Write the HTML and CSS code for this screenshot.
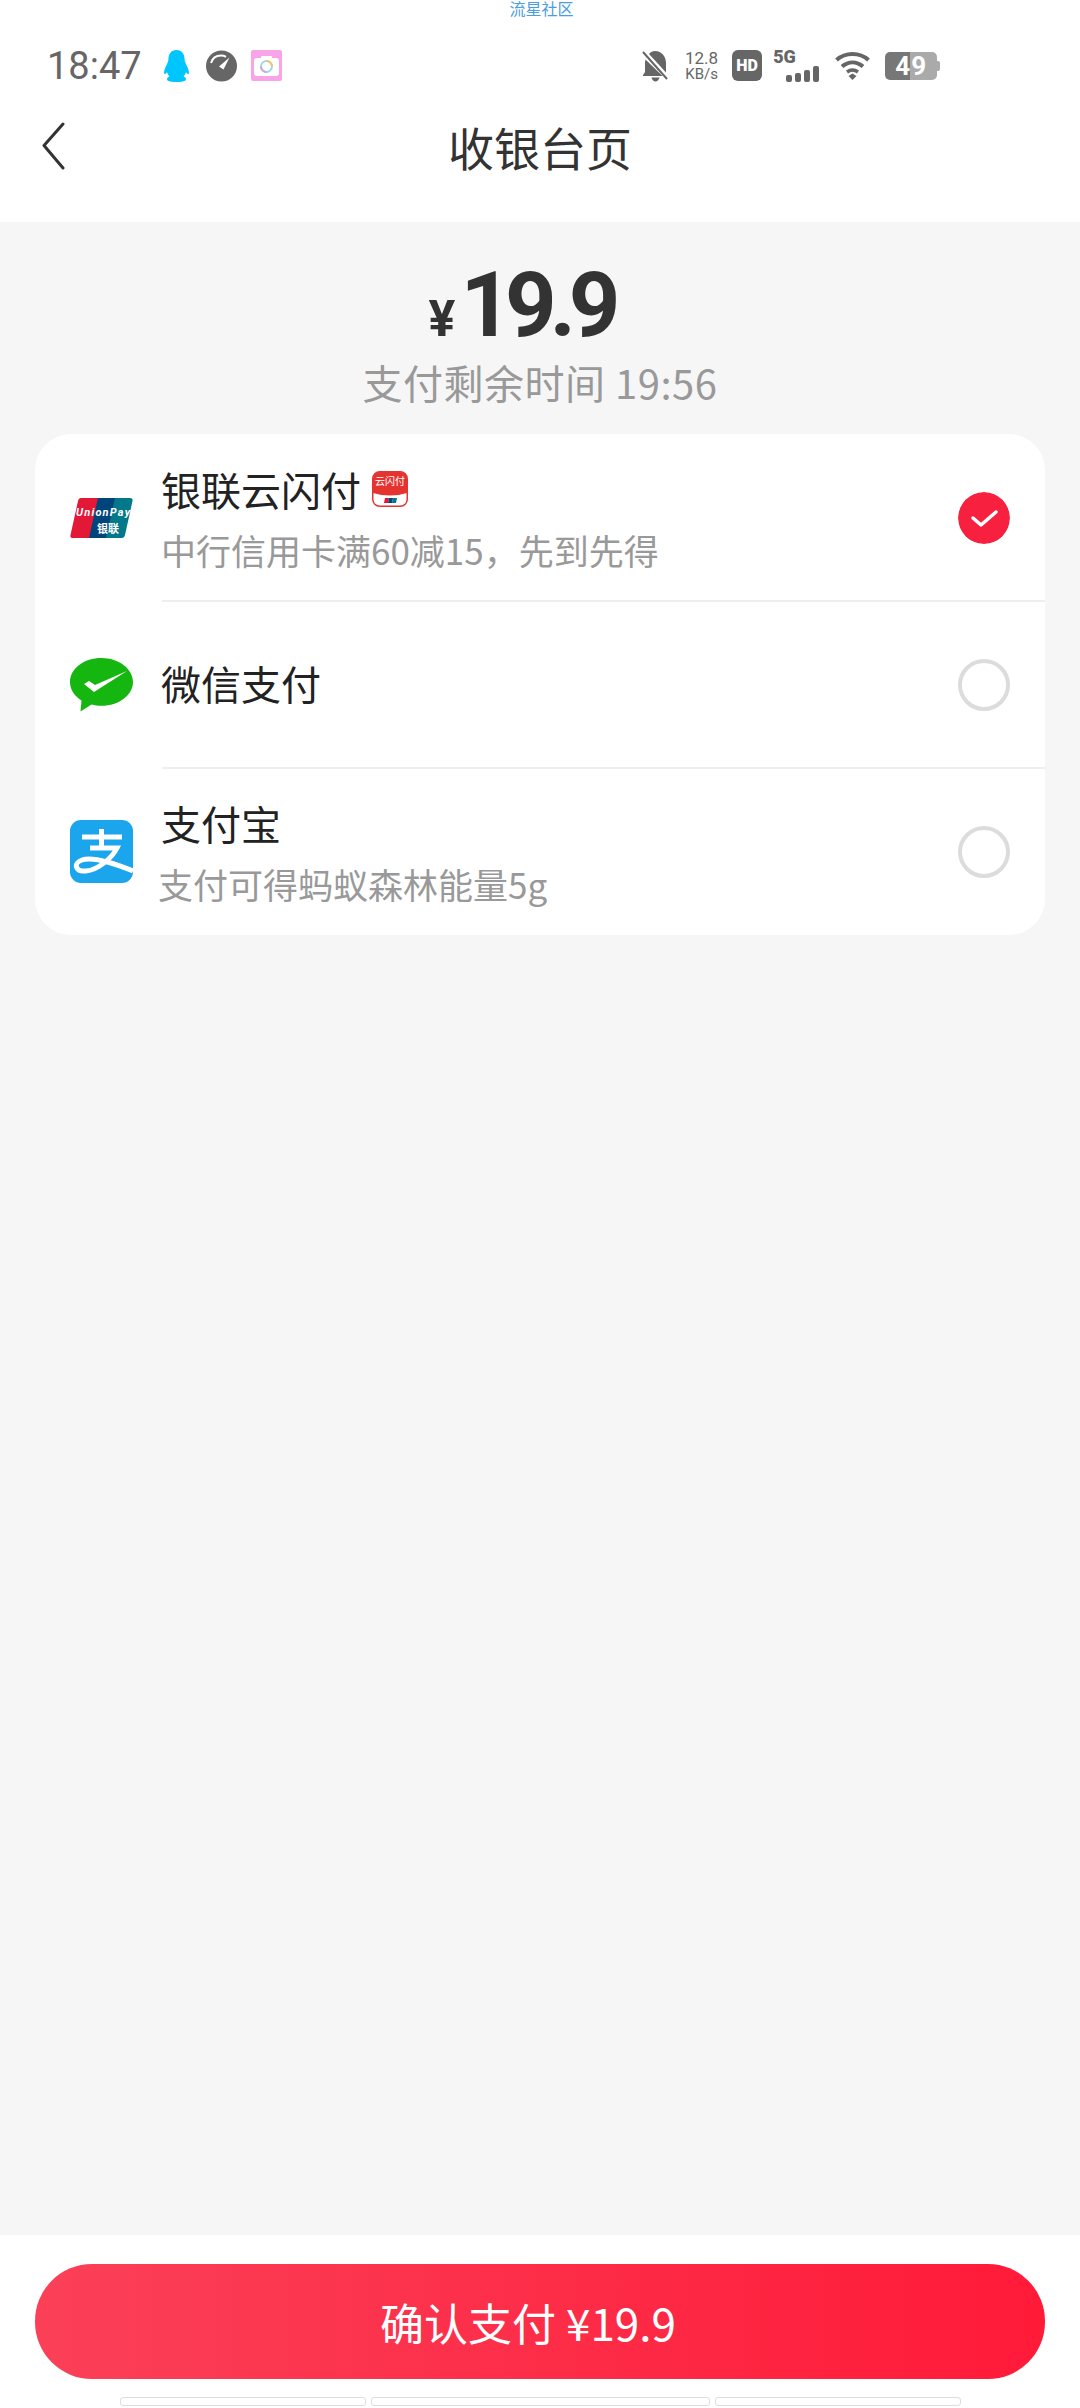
FILE: index.html
```html
<!DOCTYPE html>
<html lang="zh-CN">
<head>
    <meta charset="UTF-8">
    <meta name="viewport" content="width=device-width, initial-scale=1.0">
    <title>收银台页</title>
    <link rel="stylesheet" href="styles.css">
</head>
<body>

<header class="top">
    <div class="watermark">流星社区</div>

    <div class="status-bar">
        <span class="clock">18:47</span>
        <svg class="st-qq" width="25" height="32" viewBox="0 0 25 32">
            <path fill="#00c6ff" d="M12.500 0C7 0 4.600 4 4.400 9c0 2-.4 3-1.600 5.400C1.200 17.500 0 20.500 0 23c0 1 .6 1.300 1.200 1 .7-.3 1.300-1 1.800-1.800.5 1.600 1.300 3 2.400 4.200-1.400.6-2.400 1.500-2.400 2.600 0 1.600 1.800 3 9.500 3s9.500-1.400 9.500-3c0-1.100-1-2-2.400-2.600 1.100-1.200 1.900-2.600 2.400-4.200.5.800 1.100 1.500 1.800 1.800.6.3 1.200 0 1.200-1 0-2.500-1.200-5.500-2.800-8.600C21 12 20.600 11 20.600 9 20.400 4 18 0 12.500 0z"/>
        </svg>
        <svg class="st-gauge" width="31" height="32" viewBox="0 0 31 32">
            <circle cx="15.500" cy="16" r="15.500" fill="#666"/>
            <path d="M5 13C6.500 8 10.500 5.500 15 5.500c2 0 3.500.4 5 1.300" fill="none" stroke="#fff" stroke-width="2"/>
            <path d="M23.500 7.500L17.500 19.500 13 16.500z" fill="#fff"/>
        </svg>
        <svg class="st-cam" width="31" height="31" viewBox="0 0 31 31">
            <rect width="31" height="31" rx="2" fill="#f9a4e8"/>
            <rect x="3" y="8" width="25" height="18" rx="3" fill="#fff"/>
            <rect x="10" y="6" width="11" height="4" rx="1" fill="#fff"/>
            <circle cx="15.500" cy="16.500" r="5.500" fill="none" stroke="#9fd8e8" stroke-width="2"/>
            <path d="M15.500 11a5.500 5.500 0 0 1 5.500 5.500" fill="none" stroke="#f5c36b" stroke-width="2"/>
            <path d="M10 16.500a5.500 5.500 0 0 0 5.500 5.500" fill="none" stroke="#c9a6ea" stroke-width="2"/>
        </svg>

        <div class="status-right">
            <svg class="st-bell" width="27" height="32" viewBox="0 0 27 32">
                <path fill="#666" d="M13 1c-2.500 0-4.500 1-6 3l17 18.500V13c0-6-4-12-11-12zM3.500 9.500C3.200 10.500 3 11.800 3 13v9l-2 3v1h19.500zM9.500 27.500c.5 2.300 2 4 4 4s3.500-1.700 4-4z"/>
                <path d="M1 2l24 27" stroke="#666" stroke-width="2"/>
            </svg>
            <div class="speed"><span>12.8</span><span class="speed-unit">KB/s</span></div>
            <span class="hd">HD</span>
            <div class="signal">
                <span class="five-g">5G</span>
                <div class="signal-bars">
                    <i class="bar-1"></i><i class="bar-2"></i><i class="bar-3"></i><i class="bar-4"></i>
                </div>
            </div>
            <svg class="st-wifi" width="35" height="29" viewBox="0 0 35 29">
                <path d="M1.500 9C10.500 1 24.500 1 33.500 9" fill="none" stroke="#666" stroke-width="4"/>
                <path d="M7 15.500c6.500-5.500 14.500-5.500 21 0" fill="none" stroke="#666" stroke-width="4"/>
                <path d="M12 21c3.500-2.500 7.500-2.500 11 0" fill="none" stroke="#666" stroke-width="3.500"/>
                <path d="M13.500 25l4-2.500 4 2.500-4 4z" fill="#666"/>
            </svg>
            <div class="battery">
                <div class="battery-body"><span>49</span></div>
                <i class="battery-cap"></i>
            </div>
        </div>
    </div>

    <nav class="nav">
        <svg class="back" width="24" height="48" viewBox="0 0 24 48">
            <path d="M22 2L3 23.500 22 46" fill="none" stroke="#333" stroke-width="3" stroke-linecap="round" stroke-linejoin="round"/>
        </svg>
        <h1 class="nav-title">收银台页</h1>
    </nav>
</header>

<main class="content">
    <div class="price"><span class="price-sign">¥</span><span class="price-num">19.9</span></div>
    <div class="countdown">支付剩余时间 19:56</div>

    <section class="pay-card">
        <div class="pay-row">
            <svg class="pay-icon" width="63" height="40" viewBox="0 0 63 40">
                <path d="M11 0h19l-9 40H3c-2 0-3-1-2.500-3L8 3c.4-2 1.500-3 3-3z" fill="#e21836"/>
                <path d="M28 0h19l-9 40H19z" fill="#00447c"/>
                <path d="M45 0h15c2 0 3 1 2.500 3L55 37c-.4 2-1.500 3-3.500 3H36z" fill="#01798a"/>
                <text class="up-latin" x="6" y="18" textLength="54">UnionPay</text>
                <text class="up-cjk" x="27" y="35">银联</text>
            </svg>
            <div class="pay-text">
                <div class="pay-name">银联云闪付
                    <svg class="qp-badge" width="36" height="36" viewBox="0 0 36 36">
                        <rect x=".75" y=".75" width="34.500" height="34.500" rx="7" fill="#fff" stroke="#e5332f" stroke-width="1.500"/>
                        <path d="M1 8a7 7 0 0 1 7-7h20a7 7 0 0 1 7 7v14Q18 27 1 22z" fill="#e5332f"/>
                        <text class="qp-text" x="18" y="14" text-anchor="middle">云闪付</text>
                        <path d="M13 27h4l-1 5h-4z" fill="#e21836"/>
                        <path d="M17 27h4l-1 5h-4z" fill="#00447c"/>
                        <path d="M21 27h4l-1 5h-4z" fill="#01798a"/>
                    </svg>
                </div>
                <div class="pay-sub">中行信用卡满60减15，先到先得</div>
            </div>
            <svg class="radio" width="52" height="52" viewBox="0 0 52 52">
                <circle cx="26" cy="26" r="26" fill="#f7203f"/>
                <path d="M15 26l8 7 15-13" fill="none" stroke="#fff" stroke-width="3.500" stroke-linecap="round" stroke-linejoin="round"/>
            </svg>
        </div>

        <div class="pay-row">
            <svg class="pay-icon" width="63" height="54" viewBox="0 0 63 54">
                <path d="M31.500 0C14 0 0 10.500 0 24c0 7.500 4.500 14.200 11.500 18.500L10.500 53.500 21.500 46.500c3.200.8 6.500 1.300 10 1.300C49 47.800 63 37 63 24S49 0 31.500 0z" fill="#15b60f"/>
                <path d="M14 26l5-3 6 4 32-14-33 21z" fill="#fff"/>
            </svg>
            <div class="pay-text">
                <div class="pay-name">微信支付</div>
            </div>
            <span class="radio radio-off"></span>
        </div>

        <div class="pay-row">
            <svg class="pay-icon" width="63" height="63" viewBox="0 0 63 63">
                <rect width="63" height="63" rx="11" fill="#1aa5ec"/>
                <path d="M12 17H52M31.500 9V28M20 28H47C42 38 28 50 16 51 5 52 3 43 12 40 24 36 46 44 63 51" fill="none" stroke="#fff" stroke-width="5"/>
            </svg>
            <div class="pay-text">
                <div class="pay-name">支付宝</div>
                <div class="pay-sub pay-sub-alipay">支付可得蚂蚁森林能量5g</div>
            </div>
            <span class="radio radio-off"></span>
        </div>
    </section>
</main>

<footer class="bottom">
    <button class="confirm-btn">确认支付 ¥19.9</button>
    <div class="home-bars">
        <i class="home-bar side"></i><i class="home-bar mid"></i><i class="home-bar side"></i>
    </div>
</footer>

</body>
</html>
```

FILE: styles.css
```css
* {
    box-sizing: border-box;
}

body {
    font-family: 'Noto Sans CJK SC', 'Roboto', sans-serif;
    background-color: #f6f6f6;
    margin: 0;
    padding: 0;
    height: 2408px;
    display: flex;
    flex-direction: column;
    overflow: hidden;
}

/* Top area: status bar and title */
.top {
    background-color: #fff;
    height: 222px;
}

.watermark {
    height: 16px;
    line-height: 16px;
    font-size: 16px;
    text-align: center;
    color: #4a9de0;
    padding-left: 3px;
}

.status-bar {
    display: flex;
    align-items: center;
    height: 33px;
    margin-top: 33px;
    padding-left: 47px;
}

.clock {
    font-family: 'Roboto', sans-serif;
    font-size: 38px;
    color: #666;
    width: 117px;
}

.st-gauge {
    margin-left: 17px;
}

.st-cam {
    margin-left: 14px;
}

.status-right {
    display: flex;
    align-items: center;
    margin-left: 360px;
}

.speed {
    display: flex;
    flex-direction: column;
    align-items: center;
    margin-left: 16px;
    font-family: 'Roboto', sans-serif;
    font-size: 17px;
    line-height: 16px;
    color: #666;
}

.speed-unit {
    font-size: 15px;
}

.hd {
    margin-left: 14px;
    width: 30px;
    height: 31px;
    border-radius: 6px;
    background-color: #666;
    color: #fff;
    font-family: 'Roboto', sans-serif;
    font-weight: 900;
    font-size: 16px;
    line-height: 31px;
    text-align: center;
}

.signal {
    margin-left: 11px;
    width: 48px;
    height: 32px;
    display: flex;
    flex-direction: column;
}

.five-g {
    font-family: 'Roboto', sans-serif;
    font-weight: 900;
    font-size: 18px;
    line-height: 14px;
    color: #666;
}

.signal-bars {
    display: flex;
    align-items: flex-end;
    gap: 3px;
    height: 18px;
    margin-left: 13px;
}

.signal-bars i {
    display: block;
    width: 6px;
    background-color: #666;
    border-radius: 2px;
}

.bar-1 {
    height: 7px;
}

.bar-2 {
    height: 9px;
}

.bar-3 {
    height: 12px;
}

.bar-4 {
    height: 16px;
}

.st-wifi {
    margin-left: 14px;
}

.battery {
    display: flex;
    align-items: center;
    margin-left: 15px;
}

.battery-body {
    width: 52px;
    height: 28px;
    border-radius: 5px;
    background: linear-gradient(to right, #777 48%, #aaa 48%);
    color: #fff;
    font-family: 'Roboto', sans-serif;
    font-weight: 700;
    font-size: 26px;
    line-height: 28px;
    text-align: center;
    letter-spacing: 1px;
}

.battery-cap {
    display: block;
    width: 3px;
    height: 10px;
    background-color: #aaa;
    border-radius: 0 2px 2px 0;
}

/* Back arrow on the left, title in the middle */
.nav {
    display: grid;
    grid-template-columns: 1fr auto 1fr;
    align-items: center;
    margin-top: 36px;
    height: 56px;
}

.back {
    margin-left: 41px;
}

.nav-title {
    margin: 0;
    font-size: 46px;
    font-weight: 400;
    line-height: 56px;
    color: #333;
}

/* Middle area */
.content {
    flex: 1;
    display: flex;
    flex-direction: column;
    align-items: center;
}

.price {
    display: flex;
    align-items: baseline;
    height: 135px;
    padding-top: 32px;
    padding-right: 38px;
    color: #333;
    line-height: 104px;
}

.price-sign {
    font-family: 'Roboto', sans-serif;
    font-weight: 700;
    font-size: 50px;
    margin-right: 5px;
}

.price-num {
    font-family: 'Roboto', sans-serif;
    font-weight: 700;
    font-size: 90px;
    letter-spacing: -7px;
}

.countdown {
    height: 50px;
    font-size: 40px;
    line-height: 50px;
    letter-spacing: .5px;
    color: #999;
}

.pay-card {
    margin-top: 27px;
    width: 1010px;
    height: 501px;
    background-color: #fff;
    border-radius: 36px;
    overflow: hidden;
}

.pay-row {
    position: relative;
    display: flex;
    align-items: center;
    height: 167px;
    padding-left: 35px;
}

/* Divider starts after the icon column */
.pay-row + .pay-row::before {
    content: '';
    position: absolute;
    top: -1px;
    left: 127px;
    right: 0;
    height: 2px;
    background-color: #eeeeee;
}

.pay-icon {
    flex: none;
}

.pay-text {
    flex: 1;
    margin-left: 28px;
    padding-bottom: 3px;
}

.pay-name {
    display: flex;
    align-items: center;
    gap: 11px;
    font-size: 40px;
    line-height: 56px;
    color: #222;
}

.pay-sub {
    font-size: 35px;
    line-height: 44px;
    color: #999;
    margin-top: 11px;
}

.pay-sub-alipay {
    margin-left: -3px;
}

.radio {
    flex: none;
    display: block;
    width: 52px;
    height: 52px;
    margin-right: 35px;
    border-radius: 50%;
}

.radio-off {
    border: 4px solid #dcdcdc;
}

/* Pieces of text inside the logos */
.up-latin {
    font-family: 'Roboto', sans-serif;
    font-weight: 700;
    font-style: italic;
    font-size: 11px;
    fill: #fff;
}

.up-cjk {
    font-size: 11px;
    font-weight: 700;
    fill: #fff;
}

.qp-text {
    font-size: 10px;
    fill: #fff;
}

/* Bottom area */
.bottom {
    height: 173px;
    background-color: #fff;
    padding: 29px 35px 0;
}

.confirm-btn {
    display: block;
    width: 1010px;
    height: 115px;
    border: none;
    border-radius: 57px;
    background: linear-gradient(to right, #fb4058, #ff1a38);
    color: #fff;
    font-family: 'Noto Sans CJK SC', 'Roboto', sans-serif;
    font-size: 44px;
    padding: 0 24px 0 0;
}

.home-bars {
    display: flex;
    justify-content: center;
    gap: 5px;
    margin-top: 18px;
}

.home-bar {
    display: block;
    height: 9px;
    background-color: #fff;
    border: 1px solid #dddddd;
    border-radius: 3px;
}

.side {
    width: 246px;
}

.mid {
    width: 339px;
}
```
